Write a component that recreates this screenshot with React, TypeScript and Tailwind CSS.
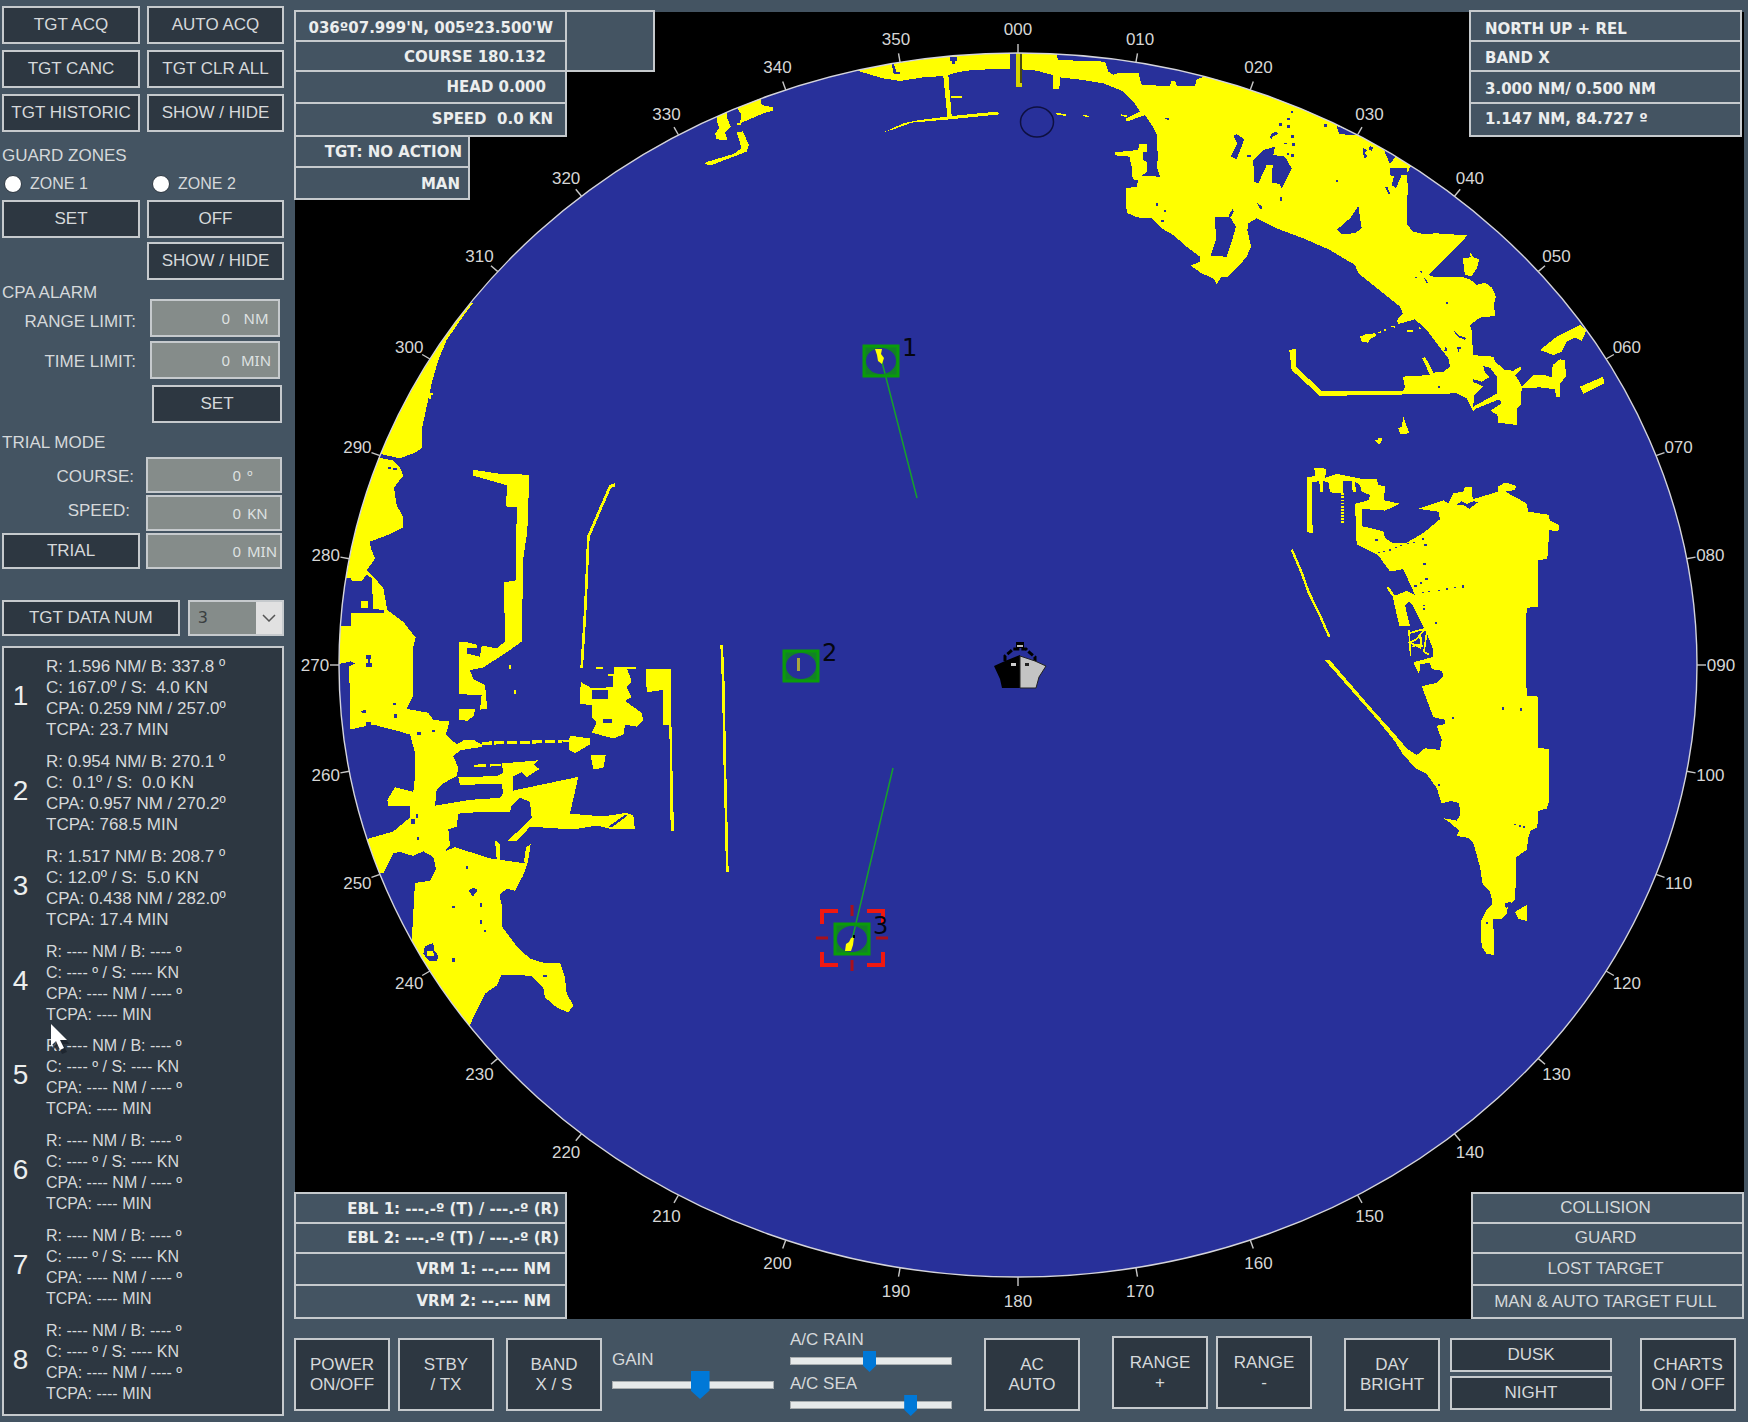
import React from "react";

const SEA = "#28309a";
const ECHO = "#ffff00";

const btn =
  "flex items-center justify-center border-2 border-[#c6cacd] bg-[#2d3741] text-center text-[17px] leading-5 text-[#d6d9db]";

function Button({ children, className }: { children: React.ReactNode; className: string }) {
  return (
    <button type="button" className={`${btn} ${className}`}>
      {children}
    </button>
  );
}

function Field({
  id,
  unit,
  className,
  unitClass,
}: {
  id: string;
  unit: string;
  className: string;
  unitClass: string;
}) {
  return (
    <div
      className={`flex items-center border-2 border-[#c6cacd] bg-[#858c8a] font-['Noto_Sans',sans-serif] text-[15px] text-[#dfe2e2] ${className}`}
    >
      <input id={id} type="text" defaultValue="0" className="min-w-0 flex-1 bg-transparent text-right outline-none" />
      <span className={unitClass}>{unit}</span>
    </div>
  );
}

const targets = [
  ["R: 1.596 NM/ B: 337.8 º", "C: 167.0º / S:  4.0 KN", "CPA: 0.259 NM / 257.0º", "TCPA: 23.7 MIN"],
  ["R: 0.954 NM/ B: 270.1 º", "C:  0.1º / S:  0.0 KN", "CPA: 0.957 NM / 270.2º", "TCPA: 768.5 MIN"],
  ["R: 1.517 NM/ B: 208.7 º", "C: 12.0º / S:  5.0 KN", "CPA: 0.438 NM / 282.0º", "TCPA: 17.4 MIN"],
  null,
  null,
  null,
  null,
  null,
];
const emptyTarget = ["R: ---- NM / B: ---- º", "C: ---- º / S: ---- KN", "CPA: ---- NM / ---- º", "TCPA: ---- MIN"];

function Cursor() {
  return (
    <svg className="absolute -top-3 left-[46px]" width="22" height="32" viewBox="0 0 22 32" aria-hidden="true">
      <path d="M3 5v22l5-5 4 9 5-2-4-8h7z" fill="#18202a" opacity="0.7" />
      <path d="M1 1v22l5-5 4 9 4-2-4-8h7z" fill="#ffffff" />
    </svg>
  );
}

function Sidebar() {
  return (
    <aside className="flex w-[294px] shrink-0 flex-col pt-1.5 pr-2.5 pb-1.5 pl-0.5">
      <div className="grid grid-cols-[138px_137px] gap-x-[7px] gap-y-1.5">
        <Button className="h-[38px]">TGT ACQ</Button>
        <Button className="h-[38px]">AUTO ACQ</Button>
        <Button className="h-[38px]">TGT CANC</Button>
        <Button className="h-[38px]">TGT CLR ALL</Button>
        <Button className="h-[38px]">TGT HISTORIC</Button>
        <Button className="h-[38px]">SHOW / HIDE</Button>
      </div>

      <h2 className="mt-3 leading-6">GUARD ZONES</h2>
      <div className="mt-1 grid h-6 grid-cols-[148px_1fr] text-base">
        {["ZONE 1", "ZONE 2"].map((z) => (
          <label key={z} className="flex items-center gap-2 pl-0.5">
            <input
              type="radio"
              name="zone"
              className="size-[18px] appearance-none rounded-full border border-[#2d3741] bg-white"
            />
            {z}
          </label>
        ))}
      </div>
      <div className="mt-1 grid grid-cols-[138px_137px] gap-x-[7px] gap-y-1">
        <Button className="h-[38px]">SET</Button>
        <Button className="h-[38px]">OFF</Button>
        <Button className="col-start-2 h-[38px]">SHOW / HIDE</Button>
      </div>

      <h2 className="mt-px leading-6">CPA ALARM</h2>
      <div className="-mt-1.5 grid grid-cols-[134px_130px] items-center gap-x-3.5 gap-y-1 pb-1.5">
        <label htmlFor="range" className="pt-2 text-right">
          RANGE LIMIT:
        </label>
        <Field id="range" unit="NM" className="h-[38px]" unitClass="ml-2 mr-1 w-9 text-center" />
        <label htmlFor="time" className="pt-1 text-right">
          TIME LIMIT:
        </label>
        <Field id="time" unit="MIN" className="h-[38px]" unitClass="ml-2 mr-1 w-9 text-center" />
      </div>
      <Button className="ml-[150px] h-[38px] w-[130px]">SET</Button>

      <h2 className="mt-2 leading-6">TRIAL MODE</h2>
      <div className="mt-0.5 grid grid-cols-[138px_136px] items-center gap-x-1.5 gap-y-0.5">
        <label htmlFor="tcourse" className="pt-1 pr-1.5 text-right">
          COURSE:
        </label>
        <Field id="tcourse" unit="º" className="h-9" unitClass="ml-1.5 mr-px w-8" />
        <label htmlFor="tspeed" className="pr-2.5 pb-1 text-right">
          SPEED:
        </label>
        <Field id="tspeed" unit="KN" className="h-9" unitClass="ml-1.5 mr-px w-8" />
        <Button className="h-9">TRIAL</Button>
        <Field id="ttime" unit="MIN" className="h-9" unitClass="ml-1.5 mr-px w-8" />
      </div>

      <div className="mt-[31px] flex gap-2">
        <Button className="h-9 w-[179px]">TGT DATA NUM</Button>
        <div className="relative w-[97px]">
          <select
            aria-label="Target number"
            defaultValue="3"
            className="size-full appearance-none border-2 border-[#c6cacd] bg-[#858c8a] pl-2 font-['DejaVu_Sans',sans-serif] text-base text-[#3a3f40]"
          >
            {targets.map((_, i) => (
              <option key={i}>{i + 1}</option>
            ))}
          </select>
          <span className="pointer-events-none absolute inset-y-0.5 right-0.5 flex w-[26px] items-center justify-center bg-[#e1e1e1]">
            <svg width="14" height="8" viewBox="0 0 14 8" fill="none" stroke="#555" strokeWidth="1.5">
              <path d="M1 1l6 6 6-6" />
            </svg>
          </span>
        </div>
      </div>

      <ol className="mt-2.5 flex w-[282px] flex-1 flex-col justify-between border-2 border-[#c6cacd] bg-[#2d3741] pt-2 pb-2.5 text-[#d6d9db]">
        {targets.map((t, i) => (
          <li key={i} className="relative flex items-center">
            <span className="w-[33px] pb-1 text-center text-[28px] leading-8 text-[#eceeee]">{i + 1}</span>
            <div className={t ? "ml-[9px] text-[17px] leading-[21px]" : "ml-[9px] text-base leading-[21px]"}>
              {(t ?? emptyTarget).map((line) => (
                <div key={line} className="whitespace-pre">
                  {line}
                </div>
              ))}
            </div>
            {i === 4 && <Cursor />}
          </li>
        ))}
      </ol>
    </aside>
  );
}

const bearings = Array.from({ length: 36 }, (_, i) => i * 10);
const CX = 1018;
const CY = 665;
const RX = 679;
const RY = 612;

function Scale() {
  return (
    <g>
      <ellipse cx={CX} cy={CY} rx={RX} ry={RY} fill="none" stroke="#d4d4dc" strokeWidth="1.4" />
      {bearings.map((b) => {
        const s = Math.sin((b * Math.PI) / 180);
        const c = Math.cos((b * Math.PI) / 180);
        return (
          <g key={b}>
            <line
              x1={CX + RX * s}
              y1={CY - RY * c}
              x2={CX + (RX + 9) * s}
              y2={CY - (RY + 9) * c}
              stroke="#c8c8c8"
              strokeWidth="1.4"
            />
            <text
              x={CX + 703 * s}
              y={CY + 6 - 636 * c}
              textAnchor="middle"
              fontSize="17"
              fill="#d6d6d6"
              fontFamily="'Liberation Sans', Arial, sans-serif"
            >
              {String(b).padStart(3, "0")}
            </text>
          </g>
        );
      })}
    </g>
  );
}

function Land() {
  return (
    <g clipPath="url(#scope)" fill={ECHO} shapeRendering="crispEdges">
      {/* northern and north-eastern coast */}
      <g transform="translate(840 0) scale(0.33333)">
        <path d="M50 212L160 140 400 130 650 130 650 165 655 180 795 185 805 215 820 225 835 218 895 218 905 255 990 258 995 243 1008 245 1010 258 1065 258 1070 238 1095 230 1150 200 1400 260 1600 350 1725 480 1708 505 1700 535 1705 560 1700 610 1702 675 1720 695 1750 702 1790 700 1880 706 1870 722 1830 760 1790 800 1767 825 1785 832 1870 832 1890 838 1910 855 1935 848 1955 862 1968 890 1962 910 1965 948 1920 953 1890 975 1897 1000 1898 1065 1930 1068 1960 1070 1965 1085 1995 1110 2020 1112 2042 1100 2045 1108 2025 1125 2035 1140 2045 1160 2060 1145 2080 1125 2115 1125 2135 1132 2138 1095 2160 1078 2175 1080 2178 1130 2160 1150 2160 1192 2148 1190 2145 1168 2100 1162 2045 1165 2042 1215 2030 1225 2032 1275 1975 1268 1972 1245 1952 1232 1985 1210 1978 1198 1910 1225 1900 1235 1890 1215 1880 1195 1850 1180 1770 1182 1440 1188 1355 1110 1348 1050 1367 1047 1367 1100 1445 1172 1690 1172 1695 1160 1688 1130 1770 1125 1747 1075 1755 1070 1780 1118 1810 1115 1830 1100 1825 1075 1790 1030 1760 990 1725 958 1700 965 1675 972 1670 962 1688 940 1680 920 1630 880 1555 820 1545 795 1470 750 1390 715 1310 685 1250 655 1225 670 1222 690 1233 740 1220 770 1195 800 1165 830 1145 830 1130 853 1120 835 1085 820 1052 797 1080 785 1080 770 1040 740 1000 705 965 685 935 655 890 652 860 638 857 565 890 560 895 540 878 538 875 500 868 470 825 466 825 457 895 450 897 432 920 432 920 455 908 458 910 480 920 485 920 515 905 528 960 530 950 500 955 465 950 440 952 405 935 375 915 345 860 365 858 355 900 335 880 305 845 272 790 250 730 240 660 232 658 268 640 268 638 225 590 212 530 207 460 207 380 212 340 220 325 225 335 348 470 335 478 343 330 358 215 368 160 388 135 395 190 370 240 360 322 350 310 228 250 232 180 243 130 235Z" />
        <path d="M332 287h33v8h-33zM645 338l33 5v5l-28-4zM728 343l20 6v4l-20-6zM842 343l18 3v5l-18-4z" />
        <path d="M1560 1010l20-8 25-2 5 8-18 8-8 12-20-4zM1612 998l10-5v7zM1627 990l12-3v6zM1652 980l12-3v6zM1702 990h18v7h-18zM1737 980l8 6-8 3z" />
        <path d="M2100 1050L2150 1010 2220 975 2240 990 2225 1022 2205 1012 2180 1025 2165 1055 2140 1065ZM2220 1160L2290 1130 2292 1150 2230 1182ZM1675 1285L1685 1280 1690 1250 1697 1270 1708 1300 1680 1302ZM1615 1315h12v8h-12zM1868 775L1892 772 1890 758 1902 772 1917 778 1912 802 1895 828 1875 825Z" />
        <g fill={SEA}>
          <path d="M1125 650L1170 650 1188 680 1175 725 1160 770 1112 768 1128 720ZM1165 648l13-22 3 8-8 18zM1180 408L1190 402 1213 418 1190 478 1172 470 1192 430ZM1240 480L1270 450 1305 440 1300 465 1335 470 1355 505 1325 565 1318 552 1295 548 1298 495 1280 495 1255 550 1242 545Z" />
          <path d="M1555 618L1565 685 1545 700 1505 702 1492 688 1530 655ZM1490 378L1560 405 1498 403ZM1632 450L1668 468 1650 492ZM1650 503L1700 505 1705 525 1685 525 1668 565 1655 555 1662 530 1650 525ZM1635 560l8 2 8 22-6-2z" />
          <path d="M1930 1098L1950 1103 1970 1130 1972 1180 1900 1220 1902 1185 1930 1160 1898 1145 1900 1138 1925 1145 1948 1132 1935 1118Z" />
          <path d="M155 190h6l8 26h12v5h-20zM330 170h22v14h-8v9h-8v-9h-6zM510 155h18v54h-18z" />
          <path d="M1570 445l12 5-8 8 8 12-8 5-6-15zM1590 436l10 8-5 8-9-4zM1453 372h8v10h-8zM1288 412l8-12 14-5 4 6-14 8-6 8zM1318 370h8v8h-8zM1342 353h8v8h-8zM1342 375h7v10h-7zM1353 332h5v8h-5zM1353 405h9v10h-9zM1333 428h8v4h-8zM1356 430h8v9h-8zM1353 462h8v9h-8zM1340 460h8v5h-8zM1320 590h6v12h-6zM1252 610l14 8v8h-6zM968 350l10 5h10v8zM948 610h5v8h-5zM972 630h6v6h-6zM963 660h8v5h-8zM1222 464h10v7h-10zM1488 540h7v5h-7z" />
          <path d="M1740 812l8 4-4 5zM1725 830l10 5h-8zM1752 832l12 15-5 3zM1818 906h6v6h-6zM1815 1042l8 2-4 12-6-4zM1850 1042h14v6h-8v8zM1838 990l22 18 20 6-6 5-20-8zM1795 1157h6v6h-6z" />
        </g>
        <path d="M528 160h17v102h-17z" fill="#d6d400" />
        <path d="M541 160h4v90h-4z" fill="#4a4a10" />
      </g>

      {/* north-western piers */}
      <g transform="translate(600 20) scale(0.33333)">
        <path d="M350 270L385 250 380 290 392 320 375 338 382 360 350 358 345 340 358 325 350 300ZM408 255L480 220 485 255 520 262 518 272 490 280 420 310 424 285ZM410 337L428 334 447 375 440 395 330 437 315 432 320 426 400 402 425 385Z" />
        <path d="M412 310h12v5h-12z" />
      </g>

      {/* western shoreline */}
      <path
        transform="translate(330 280) scale(0.33333)"
        d="M430 68L400 108 350 180 325 240 305 310 290 380 275 450 275 505 255 518 210 535 165 525 100 510 200 250 400 70ZM298 340h12v5h-6v12h-8z"
      />
      <g transform="translate(330 440) scale(0.33333 0.3954)">
        <path d="M150 45L190 52 210 70 220 90 192 120 200 165 220 195 218 222 180 238 120 257 122 272 135 300 110 330 130 345 160 375 172 430 220 460 257 500 248 530 250 645 230 680 295 690 310 708 358 712 348 745 380 770 400 760 430 758 455 770 455 776 390 785 370 800 385 830 380 850 340 868 320 885 315 925 420 910 510 905 520 893 515 870 390 872 385 853 500 850 520 842 515 818 600 812 625 810 612 822 628 832 590 853 575 840 550 850 548 887 745 852 720 945 820 952 890 943 910 950 915 985 840 983 800 975 730 985 600 978 560 1015 530 1015 570 985 605 955 600 915 570 905 545 925 540 940 460 940 385 945 380 978 355 985 360 1025 345 1040 375 1030 480 1058 580 1070 595 1065 580 1100 555 1140 530 1135 508 1150 515 1175 515 1230 560 1280 600 1312 640 1322 690 1322 705 1360 710 1400 730 1430 715 1448 680 1435 645 1410 640 1385 605 1355 515 1352 500 1380 465 1400 430 1460 415 1490 200 1400 245 1270 255 1120 300 1115 318 1085 310 1055 280 1040 250 1052 210 1042 190 1045 160 1095 90 1100 100 1012 190 990 240 955 240 925 175 925 172 910 195 878 250 890 255 850 255 790 240 745 200 735 130 720 60 732 58 572 75 565 62 560 20 568 0 500 0 45Z" />
        <path d="M428 75L505 85 598 88 592 230 580 300 575 510 525 540 460 575 420 582 430 605 465 620 472 680 450 682 455 645 388 643 388 512 412 512 442 518 442 527 412 527 412 540 450 548 455 520 500 527 525 510 522 360 558 355 560 170 527 168 532 115 430 90ZM388 680L435 680 432 698 412 710 388 708ZM537 568h6v12h-6zM552 633h6v10h-6zM93 405h22v22h-22z" />
        <path d="M853 575L918 575 918 580 892 580 905 610 890 625 905 650 885 660 935 690 940 710 920 725 885 720 880 745 850 755 785 740 800 715 785 700 785 670 750 668 752 612 785 628 848 625 850 600ZM798 573h22v7h-22zM833 592h18v6h-18zM948 578L1022 578 1025 750 1032 990 1022 990 1018 720 998 720 998 632 950 638Z" />
        <path d="M697 758h20l5-10 58 7v15l-45 22-17-7v-20h-20zM782 797L827 797 820 830 790 832ZM495 1012l14 10v45h-8zM588 1030l14-8-8 45h-12z" />
        <path d="M455 767L695 762" stroke={ECHO} strokeWidth="8" strokeDasharray="30 8" />
        <path d="M433 824L515 822" stroke={ECHO} strokeWidth="6" strokeDasharray="34 12" />
        <path
          d="M855 113L840 118 775 245 770 350 765 440 755 577M1175 518L1180 620 1184 800 1192 1092"
          fill="none"
          stroke={ECHO}
          strokeWidth="8"
        />
        <g fill={SEA}>
          <path d="M20 345L62 350 66 357 95 357 110 340 125 350 130 427 162 430 162 437 62 437 62 470 0 470Z" />
          <path d="M785 632h48v22h-48zM818 706h28v10h-28zM108 545h16v8h-5v12h8v8h-18v-8h5v-10h-6zM835 978L885 948 892 950 845 980ZM92 685l16-2v8h-12zM192 692h8v10h-8zM108 712h14v12h-14zM190 664h8v5h-8z" />
          <path d="M285 1280L310 1272 312 1290 326 1305 320 1318 298 1318 280 1300ZM365 1310h10v10h-10zM415 1140l16-8 12 6-14 16zM408 1078h5v8h-5zM366 1178h10v5h-10zM450 1172h5v8h-5zM450 1215h5v8h-5zM462 1238h5v6h-5zM638 1354h14v5h-14zM262 738h10v8h-10zM306 734h8v5h-8zM244 958h12v12h-12zM258 945h5v10h-5zM262 1004h6v8h-6zM520 1150h20v10h-14zM175 68h8v5h-8zM190 72h12v4h-12z" />
        </g>
        <path d="M93 408h22v18h-22zM290 1293h18l6 12h-22z" />
        <path d="M128 343L160 375 172 430 130 427Z" />
      </g>

      {/* eastern peninsula */}
      <g transform="translate(1260 440) scale(0.33333 0.3444)">
        <path d="M475 200L550 175 565 185 580 155 610 150 615 137 635 137 638 172 715 150 715 135 735 123 768 133 765 145 735 150 765 165 800 185 805 208 865 217 870 233 897 247 895 265 868 262 862 345 833 350 833 485 800 487 797 600 800 742 833 745 835 893 867 898 867 1050 860 1070 835 1077 832 1125 812 1135 805 1155 800 1190 768 1212 766 1335 745 1350 740 1375 722 1392 700 1392 702 1495 680 1492 665 1470 662 1400 680 1365 698 1345 690 1310 668 1290 660 1240 640 1170 625 1155 590 1150 598 1135 575 1115 550 1098 590 1105 600 1090 598 1055 575 1048 545 1055 530 1010 500 970 470 955 430 915 405 875 350 810 195 640 210 640 335 780 400 850 440 895 470 915 495 895 540 900 545 870 530 830 555 825 555 812 520 805 485 715 530 705 550 685 545 670 515 665 510 648 480 650 478 680 460 645 520 630 520 610 500 560 455 475 445 470 435 480 450 540 418 540 398 455 380 430 385 425 405 452 440 438 465 450 430 375 390 382 355 335 290 303 285 185 325 175 330 160 305 150 300 130 285 122 288 150 278 150 275 120 250 120 248 155 210 152 205 122 190 120 190 150 180 150 178 120 155 122 158 270 142 268 140 108 165 105 163 82 200 83 195 110 230 98 300 112 350 112 355 130 375 135 372 175 420 185 375 205 305 200 305 250 370 265 375 285 400 300 440 298 490 270 540 230 535 208Z" />
        <path d="M765 1370L800 1350 800 1397 775 1390ZM345 0h18v6l-6 6-8-6z" />
        <path d="M95 318L125 385 145 440 180 510 208 572" fill="none" stroke={ECHO} strokeWidth="7" />
        <path d="M248 155V240" stroke={ECHO} strokeWidth="8" strokeDasharray="5 4" />
        <path
          d="M447 552l5 75M450 560l45-12-25 30-20 10 30 15 5-30M455 600l30-8M500 560l-8 55 14 8M478 565l8 35"
          fill="none"
          stroke={ECHO}
          strokeWidth="5"
        />
        <g fill={SEA}>
          <path d="M590 188L605 178 620 186 640 178 655 180 628 200 612 190ZM735 1345l18-4-4 14-12 4z" />
          <path d="M355 325h6v4h-6zM370 321h6v4h-6zM388 317h5v4h-5zM405 310h5v4h-5zM420 304h6v4h-6zM440 298h6v4h-6zM460 295h5v4h-5zM485 286h7v5h-7zM492 303h8v4h-8zM490 358h7v5h-7zM495 402h8v5h-8zM480 413h6v4h-6zM463 422h8v5h-8zM486 441h7v4h-7zM505 438h5v4h-5zM534 435h5v4h-5zM558 431h5v4h-5zM583 427h5v4h-5zM607 422h5v7h-5zM488 478h6v4h-6zM490 488h6v5h-6zM524 528h7v5h-7zM577 805h6v6h-6zM727 775h5v8h-5zM781 778h5v8h-5zM762 1115h6v4h-6zM777 1118h6v5h-6zM790 1122h5v4h-5zM678 1400h6v5h-6zM535 998h5v6h-5zM345 288h10v4h-10z" />
        </g>
      </g>
    </g>
  );
}

function Target({ x, y, label, children }: { x: number; y: number; label: string; children: React.ReactNode }) {
  return (
    <g>
      <path
        fillRule="evenodd"
        fill="#128226"
        d={`M${x - 16} ${y - 14}h32v28h-32zM${x - 15} ${y}a15 13 0 1 0 30 0a15 13 0 1 0 -30 0z`}
      />
      <rect x={x - 17} y={y - 15} width="34" height="30" fill="none" stroke="#0a9c0a" strokeWidth="3" />
      {children}
      <text x={x + 21} y={y - 5} fontSize="24" fill="#05060f" fontFamily="'DejaVu Sans', Verdana, sans-serif">
        {label}
      </text>
    </g>
  );
}

function Radar() {
  return (
    <svg
      viewBox="294 10 1450 1309"
      className="block w-full font-normal"
      role="img"
      aria-label="Radar picture with three tracked targets"
    >
      <defs>
        <clipPath id="scope">
          <ellipse cx={CX} cy={CY} rx={RX} ry={RY} />
        </clipPath>
      </defs>
      <rect x="295" y="12" width="1449" height="1307" fill="#000" />
      <ellipse cx={CX} cy={CY} rx={RX} ry={RY} fill={SEA} />
      <Land />
      <Scale />
      <ellipse cx="1037" cy="122" rx="16.5" ry="15" fill="none" stroke="#0e1040" strokeWidth="1.5" />

      <g stroke="#16a02c" strokeWidth="1.5">
        <path d="M882 362L917 498M893 768L852 940" />
      </g>
      <g fill="none" stroke="#f01810" strokeWidth="4">
        <path d="M822 924V911H838M867 911H883V924M822 952V965H838M867 965H883V952" />
      </g>
      <path d="M816 938H828M876 938H888M852 905V916M852 960V971" stroke="#a8101c" strokeWidth="3" />
      <Target x={881} y={361} label="1">
        <path d="M875 349h7l-1 5 3 4-2 6-4-3-1-6z" fill={ECHO} />
      </Target>
      <Target x={801} y={666} label="2">
        <path d="M797 658h3v13h-3z" fill="#a9a53c" />
      </Target>
      <Target x={852} y={939} label="3">
        <path d="M851 938l3-1-1 8-2 6h-6l1-7 3-2z" fill={ECHO} />
        <path d="M853 935h2v3h-2z" fill="#000" />
      </Target>

      {/* own ship */}
      <g>
        <path d="M1005 661v-5l5-4 3-3h13l4 4 5 4v5" fill="none" stroke="#000" strokeWidth="3" strokeDasharray="6 2" />
        <rect x="1016" y="642" width="8" height="6" fill="#000" />
        <rect x="1017" y="645" width="6" height="2" fill="#bbb" />
        <path d="M994 666l11-5 15-6v33h-18l-2-9z" fill="#000" />
        <path d="M1020 656l15 5 11 5-7 11-3 11h-16z" fill="#c4c4c4" stroke="#222" strokeWidth="1" />
        <path d="M1011 663h5v3h-5z" fill="#ccc" />
        <path d="M1025 663h4v3h-4z" fill="#222" />
      </g>
    </svg>
  );
}

const panelText = "font-['DejaVu_Sans',Verdana,sans-serif] text-[15px] font-bold text-[#eceeee]";
const line = "border-[#c6cacd]";
const rowHeights = ["h-[30px] border-b-2", "h-[30px] border-b-2", "h-8 border-b-2", "h-[31px]"];

function Readout({ rows, className, rowClass }: { rows: string[]; className: string; rowClass: string[] }) {
  return (
    <div className={`absolute w-[273px] border-2 bg-[#445462] ${line} ${className}`}>
      {rows.map((r, i) => (
        <div key={r} className={`flex items-center whitespace-pre ${line} ${rowHeights[i]} ${rowClass[i]}`}>
          {r}
        </div>
      ))}
    </div>
  );
}

function Slider({ id, label, value, small }: { id: string; label: string; value: number; small?: boolean }) {
  return (
    <div className="flex flex-col">
      <label htmlFor={id} className="leading-5">
        {label}
      </label>
      <input
        id={id}
        type="range"
        defaultValue={value}
        className={
          "w-[162px] appearance-none bg-transparent [&::-webkit-slider-runnable-track]:h-2 [&::-webkit-slider-runnable-track]:border [&::-webkit-slider-runnable-track]:border-[#a9aeb0] [&::-webkit-slider-runnable-track]:bg-[#e7eaea] [&::-webkit-slider-thumb]:appearance-none [&::-webkit-slider-thumb]:bg-[#0078d7] [&::-webkit-slider-thumb]:[clip-path:polygon(0_0,100%_0,100%_70%,50%_100%,0_70%)] " +
          (small
            ? "h-[22px] [&::-webkit-slider-thumb]:-mt-[7px] [&::-webkit-slider-thumb]:h-[21px] [&::-webkit-slider-thumb]:w-[13px]"
            : "h-[30px] [&::-webkit-slider-thumb]:-mt-[11px] [&::-webkit-slider-thumb]:h-[28px] [&::-webkit-slider-thumb]:w-[19px]")
        }
      />
    </div>
  );
}

export default function App() {
  return (
    <div className="flex min-h-screen bg-[#445462] font-['Liberation_Sans',Arial,sans-serif] text-[17px] text-[#d6d9db]">
      <Sidebar />
      <main className="flex min-w-0 flex-1 flex-col pt-2.5 pr-1">
        <section className={`relative ${panelText}`}>
          <Radar />
          <div className={`absolute top-0 left-[271px] h-[62px] w-[90px] border-2 bg-[#445462] ${line}`} />
          <Readout
            className="top-0 left-0"
            rows={["036º07.999'N, 005º23.500'W", "COURSE 180.132", "HEAD 0.000", "SPEED  0.0 KN"]}
            rowClass={[
              "justify-end pt-1 pr-3",
              "justify-end pt-0.5 pr-[19px]",
              "justify-end pr-[19px]",
              "justify-end pr-3",
            ]}
          />
          <div className={`absolute top-[127px] left-0 w-[176px] border-2 border-t-0 bg-[#445462] ${line}`}>
            <div className={`flex h-[31px] items-center justify-end border-b-2 pt-0.5 pr-1.5 ${line}`}>
              TGT: NO ACTION
            </div>
            <div className="flex h-[30px] items-center justify-end pt-0.5 pr-2">MAN</div>
          </div>
          <Readout
            className="top-0 right-0.5"
            rows={["NORTH UP + REL", "BAND X", "3.000 NM/ 0.500 NM", "1.147 NM, 84.727 º"]}
            rowClass={["pt-1.5 pl-3.5", "pt-1 pl-3.5", "pt-1 pl-3.5", "pl-3.5"]}
          />
          <Readout
            className="bottom-0 left-0"
            rows={["EBL 1: ---.-º (T) / ---.-º (R)", "EBL 2: ---.-º (T) / ---.-º (R)", "VRM 1: --.--- NM", "VRM 2: --.--- NM"]}
            rowClass={["justify-end pt-0.5 pr-1.5", "justify-end pr-1.5", "justify-end pr-3.5", "justify-end pr-3.5"]}
          />
          <Readout
            className="right-0 bottom-0 font-['Liberation_Sans',Arial,sans-serif] text-[17px] font-normal text-[#d6d9db]"
            rows={["COLLISION", "GUARD", "LOST TARGET", "MAN & AUTO TARGET FULL"]}
            rowClass={["justify-center pr-1", "justify-center pr-1", "justify-center pr-1", "justify-center pr-1"]}
          />
        </section>

        <section className="flex items-start pt-[19px]">
          <Button className="h-[73px] w-24">
            POWER
            <br />
            ON/OFF
          </Button>
          <Button className="ml-2 h-[73px] w-24">
            STBY
            <br />/ TX
          </Button>
          <Button className="ml-3 h-[73px] w-24">
            BAND
            <br />X / S
          </Button>
          <div className="mt-3 ml-2.5">
            <Slider id="gain" label="GAIN" value={55} />
          </div>
          <div className="-mt-2 ml-4 flex flex-col gap-0.5">
            <Slider id="rain" label="A/C RAIN" value={49} small />
            <Slider id="sea" label="A/C SEA" value={77} small />
          </div>
          <Button className="ml-8 h-[73px] w-24">
            AC
            <br />
            AUTO
          </Button>
          <Button className="-mt-0.5 ml-8 h-[73px] w-24">
            RANGE
            <br />+
          </Button>
          <Button className="-mt-0.5 ml-2 h-[73px] w-24">
            RANGE
            <br />-
          </Button>
          <Button className="ml-8 h-[73px] w-24">
            DAY
            <br />
            BRIGHT
          </Button>
          <div className="ml-2.5 flex flex-col gap-1">
            <Button className="h-[34px] w-[162px]">DUSK</Button>
            <Button className="h-[34px] w-[162px]">NIGHT</Button>
          </div>
          <Button className="mr-2 ml-auto h-[73px] w-24">
            CHARTS
            <br />
            ON / OFF
          </Button>
        </section>
      </main>
    </div>
  );
}
